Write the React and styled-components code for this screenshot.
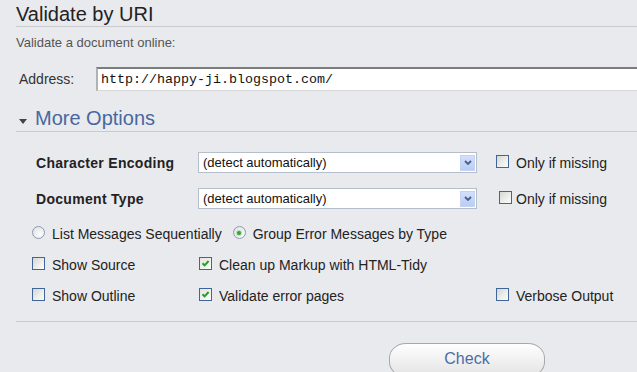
import React from 'react'
import styled, {createGlobalStyle} from 'styled-components'

const GlobalStyle = createGlobalStyle`
  html, body {
    margin: 0;
    padding: 0;
    background: #e9eaee;
    overflow: hidden;
  }
  body {
    font-family: "Liberation Sans", Arial, sans-serif;
  }
`

const Page = styled.div`
  padding: 0 0 0 16px;
  min-height: 372px;
`

const Title = styled.h2`
  margin: 0;
  padding-top: 3px;
  font-size: 20px;
  font-weight: normal;
  line-height: 23px;
  color: #222;
  border-bottom: 1px solid #c9cacd;
`

const Intro = styled.p`
  margin: 8px 0 0;
  font-size: 13px;
  line-height: 15px;
  color: #555;
`

const AddressRow = styled.div`
  display: grid;
  grid-template-columns: 77px 1fr;
  align-items: center;
  margin: 17px -10px 0 0;
  padding-left: 3px;
`

const Label = styled.label`
  font-size: 14px;
  line-height: 16px;
  color: #333;
`

const UrlInput = styled.input`
  box-sizing: border-box;
  height: 24px;
  width: 100%;
  border-style: solid;
  border-width: 2px 1px 1px 2px;
  border-color: #7c7c7c #dcdcdc #d8d8d8 #b2b2b2;
  background: #fff;
  padding: 0 3px;
  font-family: "Liberation Mono", "Courier New", monospace;
  font-size: 13.33px;
  color: #111;
  outline: none;
`

const MoreHead = styled.div`
  display: flex;
  align-items: center;
  margin-top: 16px;
  padding-bottom: 1px;
  font-size: 20px;
  line-height: 23px;
  color: #46689f;
  border-bottom: 1px solid #c9cacd;
  svg {
    margin: 5px 8px 0 3px;
  }
`

const Options = styled.div`
  padding-top: 20px;
`

const SelectRow = styled.div`
  display: grid;
  grid-template-columns: 162px 279px auto;
  align-items: center;
  height: 21px;
  padding-left: 20px;
  & + & {
    margin-top: 15px;
  }
`

const FieldLabel = styled.span`
  font-size: 14px;
  font-weight: bold;
  line-height: 16px;
  letter-spacing: 0.3px;
  color: #222;
`

const FakeSelect = styled.div`
  box-sizing: border-box;
  height: 21px;
  display: flex;
  align-items: center;
  padding: 2px 1px 2px 4px;
  border: 1px solid #b5bfcb;
  background: #fff;
  font-size: 13px;
  color: #111;
`

const SelectArrow = styled.span`
  box-sizing: border-box;
  margin-left: auto;
  width: 15px;
  height: 16px;
  display: flex;
  align-items: center;
  justify-content: center;
  background: linear-gradient(#d3dffb, #b9cdf6);
  border: 1px solid #c4d3f2;
`

const SideOption = styled.label`
  display: flex;
  align-items: center;
  gap: ${p => 7 - p.$shift}px;
  padding-left: ${p => 19 + p.$shift}px;
  font-size: 14px;
  line-height: 16px;
  color: #222;
`

const RadioRow = styled.div`
  display: flex;
  align-items: center;
  gap: 11px;
  height: 20px;
  margin-top: 15px;
  padding-left: 16px;
`

const CheckRow = styled.div`
  display: grid;
  grid-template-columns: 167px 297px auto;
  align-items: center;
  height: 20px;
  margin-top: 11px;
  padding-left: 16px;
`

const Choice = styled.label`
  display: flex;
  align-items: center;
  gap: 7px;
  font-size: 14px;
  line-height: 16px;
  color: #222;
  white-space: nowrap;
`

const Box = styled.span`
  box-sizing: border-box;
  flex: none;
  width: 13px;
  height: 13px;
  margin-bottom: 3px;
  display: flex;
  align-items: center;
  justify-content: center;
  border: 1px solid #40659a;
  background: ${p => p.$checked
    ? 'linear-gradient(135deg, #e4e4e0, #fbfbfb)'
    : 'linear-gradient(135deg, #d6d6d2 0%, #efefed 60%, #fcfcfc 100%)'};
`

const Radio = styled.span`
  box-sizing: border-box;
  flex: none;
  width: 13px;
  height: 13px;
  margin-bottom: 3px;
  border-radius: 50%;
  border: 1px solid #8d9cb0;
  background: radial-gradient(circle at 65% 65%, #fdfdfd 0%, #e2e3e6 80%);
  display: flex;
  align-items: center;
  justify-content: center;
  &::after {
    content: '';
    display: ${p => (p.$checked ? 'block' : 'none')};
    width: 4px;
    height: 4px;
    border-radius: 50%;
    background: #36a436;
    box-shadow: 0 0 0 1px #b7dcb7;
  }
`

const Divider = styled.div`
  margin-top: 15px;
  border-top: 1px solid #c9cacd;
`

const CheckButton = styled.button`
  display: block;
  margin: 21px 0 0 373px;
  width: 156px;
  height: 34px;
  border: 1px solid #a8a8a8;
  border-radius: 17px / 15px;
  background: linear-gradient(#fefefe, #f1f1f1 50%, #e3e3e3);
  font-family: inherit;
  font-size: 16px;
  color: #4d6ca6;
  padding: 0 0 2px;
`

const Caret = () => (
  <svg width="8" height="5" viewBox="0 0 8 5">
    <path d="M0 0 H8 L4 5 Z" fill="#444" />
  </svg>
)

const Chevron = () => (
  <svg width="8" height="5" viewBox="0 0 8 5">
    <path d="M1 1 L4 4 L7 1" fill="none" stroke="#4b5f86" strokeWidth="1.8" />
  </svg>
)

const Tick = () => (
  <svg width="9" height="9" viewBox="0 0 9 9">
    <path d="M1.5 4.2 L3.6 6.4 L7.6 2" fill="none" stroke="#23a023" strokeWidth="2" />
  </svg>
)

const Check = ({checked, children}) => (
  <Choice>
    <Box $checked={checked}>{checked && <Tick />}</Box>
    {children}
  </Choice>
)

const App = () => {
  const selects = [
    {label: 'Character Encoding', shift: 0},
    {label: 'Document Type', shift: 3}
  ]

  return (
    <Page>
      <GlobalStyle />
      <Title>Validate by URI</Title>
      <Intro>Validate a document online:</Intro>

      <AddressRow>
        <Label htmlFor="uri">Address:</Label>
        <UrlInput id="uri" type="text" defaultValue="http://happy-ji.blogspot.com/" />
      </AddressRow>

      <MoreHead>
        <Caret />
        More Options
      </MoreHead>

      <Options>
        {selects.map(s => (
          <SelectRow key={s.label}>
            <FieldLabel>{s.label}</FieldLabel>
            <FakeSelect>
              (detect automatically)
              <SelectArrow><Chevron /></SelectArrow>
            </FakeSelect>
            <SideOption $shift={s.shift}>
              <Box />
              Only if missing
            </SideOption>
          </SelectRow>
        ))}

        <RadioRow>
          <Choice><Radio />List Messages Sequentially</Choice>
          <Choice><Radio $checked />Group Error Messages by Type</Choice>
        </RadioRow>

        <CheckRow>
          <Check>Show Source</Check>
          <Check checked>Clean up Markup with HTML-Tidy</Check>
        </CheckRow>
        <CheckRow>
          <Check>Show Outline</Check>
          <Check checked>Validate error pages</Check>
          <Check>Verbose Output</Check>
        </CheckRow>
      </Options>

      <Divider />
      <CheckButton>Check</CheckButton>
    </Page>
  )
}

export default App
